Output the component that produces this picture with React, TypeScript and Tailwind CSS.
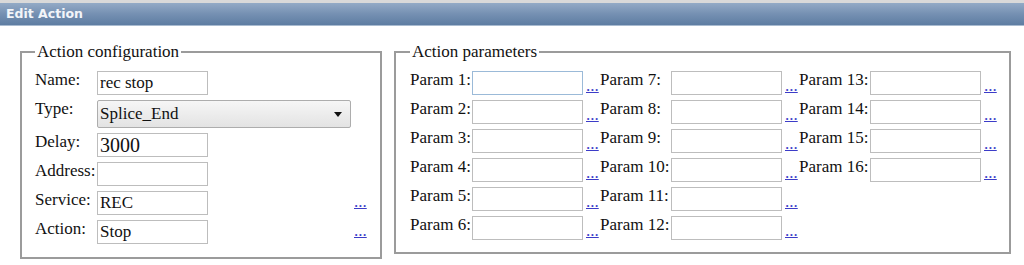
import React from "react";

const serif = { fontFamily: '"Liberation Serif", "Times New Roman", serif' };

function Field({ value, focused, big }: { value?: string; focused?: boolean; big?: boolean }) {
  return (
    <input
      readOnly
      value={value ?? ""}
      style={serif}
      className={
        "h-[24px] w-[111px] bg-white px-[2px] text-[#111] outline-none border " +
        (focused ? "border-[#9bbad8]" : "border-[#bdbdbd]") +
        (big ? " text-[20px]" : " text-[17px]")
      }
    />
  );
}

function Dots({ left }: { left?: boolean }) {
  return (
    <a
      href="#"
      className={
        "self-end pl-[3px] text-[17px] leading-[17px] text-[#3c3cc8] underline " +
        (left ? "mb-[5px]" : "mb-[1px]")
      }
    >
      ...
    </a>
  );
}

function Label({ children }: { children: React.ReactNode }) {
  return <span className="text-[17px] leading-[18px] text-[#111] whitespace-nowrap">{children}</span>;
}

export default function App() {
  const rows = [
    [1, 7, 13],
    [2, 8, 14],
    [3, 9, 15],
    [4, 10, 16],
    [5, 11],
    [6, 12],
  ];

  return (
    <div className="w-[1024px] h-[265px] bg-white overflow-hidden">
      {/* title bar */}
      <div className="h-[3px] bg-[#d9d9d9]" />
      <div
        className="h-[23px] flex items-center pl-[6px] bg-linear-to-b from-[#93aac6] via-[#7590b2] to-[#5e7da2] border-b border-[#a9bbd0]"
        style={{ fontFamily: '"DejaVu Sans", Verdana, sans-serif' }}
      >
        <span className="text-[12.5px] font-bold text-[#f2f5f9]">Edit Action</span>
      </div>

      <div className="flex items-start pl-[20px] pt-[16px] gap-[12px]" style={serif}>
        {/* Action configuration */}
        <fieldset className="w-[362px] border-2 border-[#9b9b9b] pl-[13px] pt-[9px] pb-[13px]">
          <legend className="ml-0 px-[2px] text-[17px] leading-[20px] text-[#111]">Action configuration</legend>
          <div className="grid grid-cols-[62px_254px_17px] gap-y-[5px]">
            <div className="h-[24px] flex items-start"><Label>Name:</Label></div>
            <Field value="rec stop" />
            <span />

            <div className="h-[28px] flex items-start"><Label>Type:</Label></div>
            <div className="h-[28px] w-[254px] flex items-center justify-between pl-[2px] pr-[8px] border border-[#adadad] rounded-[2px] bg-linear-to-b from-[#f6f6f6] to-[#e3e3e3]">
              <span className="text-[17px] text-[#111]">Splice_End</span>
              <svg width="8" height="5" viewBox="0 0 8 5">
                <path d="M0 0 L8 0 L4 5 Z" fill="#111" />
              </svg>
            </div>
            <span />

            <div className="h-[24px] flex items-start"><Label>Delay:</Label></div>
            <Field value="3000" big />
            <span />

            <div className="h-[24px] flex items-start"><Label>Address:</Label></div>
            <Field />
            <span />

            <div className="h-[24px] flex items-start"><Label>Service:</Label></div>
            <Field value="REC" />
            <Dots left />

            <div className="h-[24px] flex items-start"><Label>Action:</Label></div>
            <Field value="Stop" />
            <Dots left />
          </div>
        </fieldset>

        {/* Action parameters */}
        <fieldset className="w-[617px] border-2 border-[#9b9b9b] pl-[14px] pt-[9px] pb-[12px]">
          <legend className="ml-0 px-[2px] text-[17px] leading-[20px] text-[#111]">Action parameters</legend>
          <div className="grid grid-cols-[62px_111px_17px_71px_111px_17px_71px_111px_17px] gap-y-[5px]">
            {rows.map((r) =>
              [0, 1, 2].map((c) =>
                r[c] !== undefined ? (
                  <React.Fragment key={`${r[0]}-${c}`}>
                    <div className="h-[24px] flex items-start">
                      <Label>Param {r[c]}:</Label>
                    </div>
                    <Field focused={r[c] === 1} />
                    <Dots />
                  </React.Fragment>
                ) : (
                  <React.Fragment key={`${r[0]}-${c}`}>
                    <span />
                    <span />
                    <span />
                  </React.Fragment>
                )
              )
            )}
          </div>
        </fieldset>
      </div>
    </div>
  );
}
